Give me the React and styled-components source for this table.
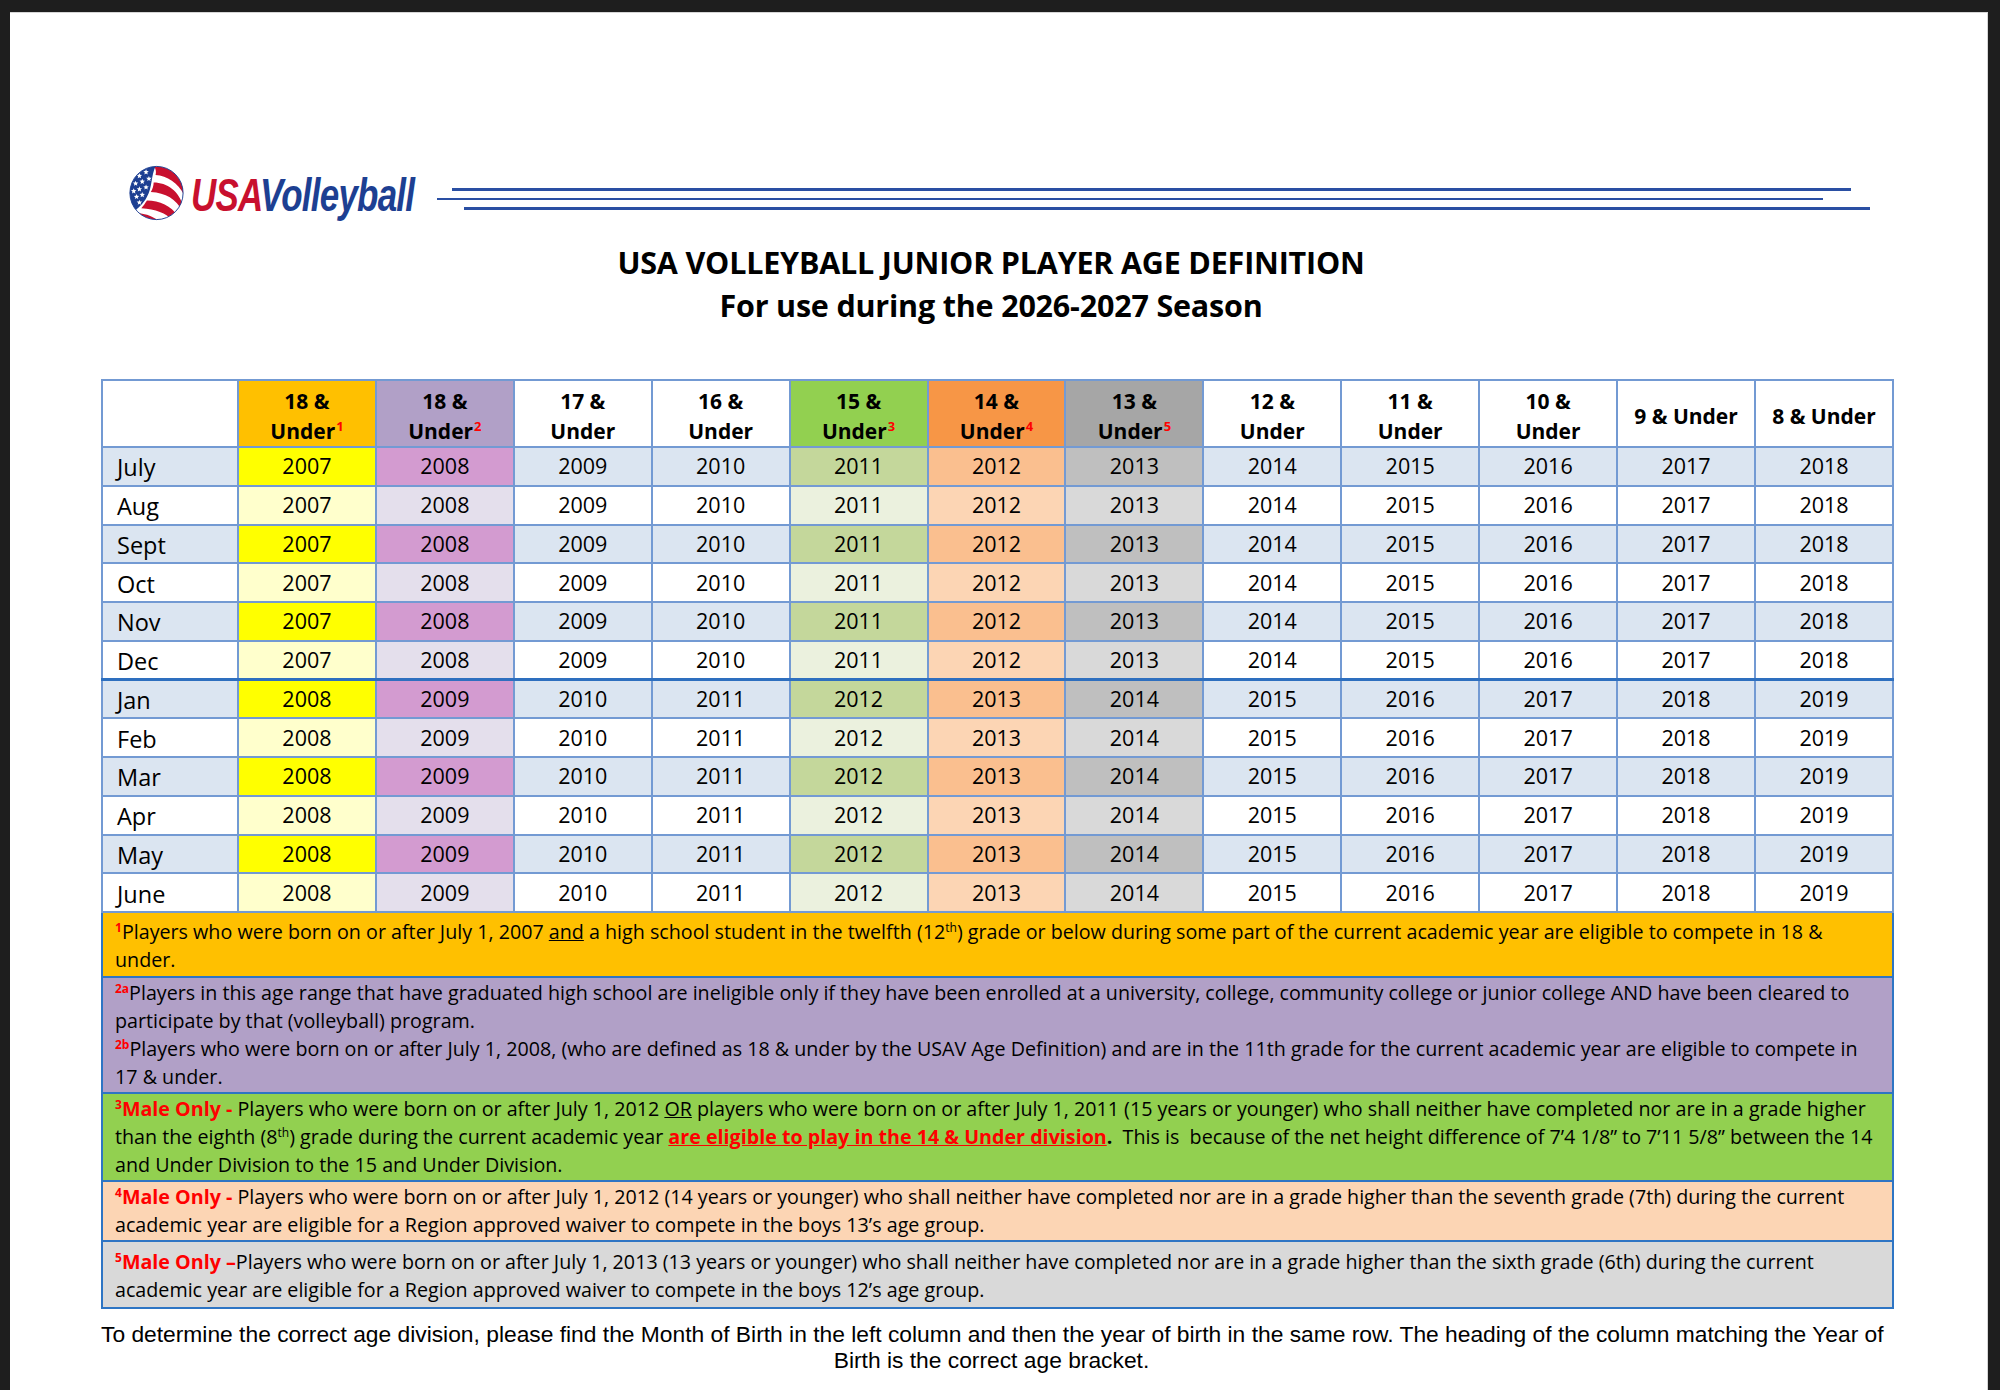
import React from "react";
import styled, { createGlobalStyle } from "styled-components";

const GlobalStyle = createGlobalStyle`
  html, body {
    margin: 0;
    padding: 0;
    background: #1e1e1e;
  }
  body {
    font-family: "Open Sans", "Liberation Sans", sans-serif;
    color: #000;
  }
`;

const Frame = styled.div`
  padding: 12px 12px 0 10px;
`;

const Page = styled.section`
  background: #fff;
  min-height: 1378px;
  border-top: 1px solid #d6d6d6;
  border-right: 1px solid #d6d6d6;
  box-sizing: border-box;
  padding: 150px 94px 0 91px;
`;

const HeaderRow = styled.div`
  display: flex;
  align-items: center;
  padding-left: 27px;
  height: 60px;
`;

const Logo = styled.div`
  display: flex;
  align-items: center;
  width: 287px;
  height: 60px;
`;

const Wordmark = styled.div`
  width: 224px;
  margin-left: 6px;
  overflow: visible;
  white-space: nowrap;
  font-family: "Liberation Sans", Arial, sans-serif;
  font-weight: 700;
  font-style: italic;
  font-size: 46px;
  letter-spacing: -1px;
  line-height: 1;
  transform: scaleX(0.76);
  transform-origin: left center;
  margin-top: 4px;
`;

const WordPart = styled.span`
  color: ${({ red }) => (red ? "#c8102e" : "#1d3f92")};
`;

const RuleStack = styled.div`
  display: flex;
  flex-direction: column;
  gap: 7px;
  width: 1433px;
  margin-left: 22px;
  margin-top: 12px;
`;

const Rule = styled.div`
  height: 2.5px;
  background: #2a4fa3;
  margin-left: ${({ left }) => left}px;
  margin-right: ${({ right }) => right}px;
`;

const Title = styled.h1`
  margin: 18px 0 0;
  padding-right: 12px;
  text-align: center;
  font-family: "Open Sans", sans-serif;
  font-weight: 700;
  font-size: 30.5px;
  line-height: 43px;
  letter-spacing: -0.2px;
`;

const Grid = styled.table`
  margin-top: 52px;
  width: 1793px;
  table-layout: fixed;
  border-collapse: collapse;
  font-family: "Open Sans", sans-serif;
`;

const HeadCell = styled.th`
  background: ${({ bg }) => bg || "#fff"};
  border: 2px solid #739ad3;
  height: 67px;
  padding: 5px 0 0;
  box-sizing: border-box;
  font-size: 21px;
  font-weight: 700;
  line-height: 30px;
  text-align: center;
  vertical-align: middle;
`;

const Row = styled.tr`
  background: ${({ shaded }) => (shaded ? "#dbe5f1" : "#fff")};
`;

const MonthCell = styled.td`
  border: 2px solid #739ad3;
  border-top: ${({ split }) => (split ? "3px solid #2e6fbf" : "2px solid #739ad3")};
  height: 38.75px;
  padding: 2px 0 0 14px;
  box-sizing: border-box;
  font-size: 23.5px;
  line-height: 30px;
`;

const YearCell = styled.td`
  border: 2px solid #739ad3;
  border-top: ${({ split }) => (split ? "3px solid #2e6fbf" : "2px solid #739ad3")};
  background: ${({ bg }) => bg || "transparent"};
  height: 38.75px;
  padding: 0;
  box-sizing: border-box;
  text-align: center;
  font-size: 21.5px;
  line-height: 30px;
`;

const Sup = styled.sup`
  color: ${({ red }) => (red ? "#ff0000" : "inherit")};
  font-size: ${({ small }) => (small ? "12px" : "13px")};
  font-weight: ${({ red }) => (red ? 700 : 400)};
  line-height: 0;
  vertical-align: ${({ small }) => (small ? "7px" : "8px")};
  margin-left: ${({ gap }) => (gap ? "1px" : "0")};
`;

const Notes = styled.div`
  width: 1793px;
  box-sizing: border-box;
  border-left: 2px solid #2e75c4;
  border-right: 2px solid #2e75c4;
  border-bottom: 2px solid #2e75c4;
  font-family: "Open Sans", sans-serif;
  font-size: 19.7px;
`;

const Note = styled.div`
  background: ${({ bg }) => bg};
  padding: ${({ pad }) => pad};
  border-top: ${({ first }) => (first ? "none" : "2px solid #2e75c4")};
  line-height: 28px;
`;

const Line = styled.div`
  white-space: nowrap;
`;

const Male = styled.span`
  color: #ff0000;
  font-weight: 700;
`;

const U = styled.span`
  text-decoration: underline;
`;

const Callout = styled.span`
  color: #ff0000;
  font-weight: 700;
  text-decoration: underline;
`;

const Footer = styled.div`
  margin: 12px 0 0;
  width: 1781px;
  text-align: center;
  font-family: "Liberation Sans", Arial, sans-serif;
  font-size: 22.8px;
  line-height: 26px;
`;

const FooterLine = styled.div`
  white-space: nowrap;
`;

const starPoints = (cx, cy, r) => {
  const pts = [];
  for (let i = 0; i < 10; i++) {
    const rad = i % 2 === 0 ? r : r * 0.45;
    const a = -Math.PI / 2 + (i * Math.PI) / 5;
    pts.push(`${(cx + rad * Math.cos(a)).toFixed(2)},${(cy + rad * Math.sin(a)).toFixed(2)}`);
  }
  return pts.join(" ");
};

const stars = [
  [12, 12], [19, 8], [8, 20], [15, 18], [22, 15],
  [6, 28], [12, 26], [19, 24], [9, 34], [15, 32], [12, 40],
];

function Ball() {
  return (
    <svg width="60" height="60" viewBox="0 0 60 60">
      <defs>
        <clipPath id="ballClip">
          <circle cx="30" cy="30" r="28" />
        </clipPath>
      </defs>
      <g clipPath="url(#ballClip)">
        <circle cx="30" cy="30" r="28" fill="#fff" />
        <path d="M0 0 H30 C24 10 26 24 20 34 C16 42 10 46 4 52 L0 60 Z" fill="#1d3f92" />
        {stars.map(([x, y], i) => (
          <polygon key={i} points={starPoints(x, y, 3)} fill="#fff" />
        ))}
        <path d="M27 1 C42 0 56 10 60 28 L60 34 C54 20 42 12 29 11 C30 7 29 4 27 1 Z" fill="#c8102e" />
        <path d="M27 19 C41 19 54 28 58 44 L58 50 C50 36 40 30 24 29 C26 26 27 22 27 19 Z" fill="#c8102e" />
        <path d="M20 38 C33 38 46 44 52 54 L48 60 C42 52 30 47 14 46 C16 44 18 41 20 38 Z" fill="#c8102e" />
        <path d="M4 52 C12 50 22 52 34 60 L10 60 Z" fill="#c8102e" />
      </g>
      <circle cx="30" cy="30" r="28" fill="none" stroke="#1d3f92" strokeWidth="1" />
    </svg>
  );
}

const columns = [
  { head: ["18 &", "Under"], sup: "1", headBg: "#ffc000", dark: "#ffff00", light: "#ffffcc", start: 2007 },
  { head: ["18 &", "Under"], sup: "2", headBg: "#b1a0c7", dark: "#d39bd0", light: "#e4dfec", start: 2008 },
  { head: ["17 &", "Under"], start: 2009 },
  { head: ["16 &", "Under"], start: 2010 },
  { head: ["15 &", "Under"], sup: "3", headBg: "#92d050", dark: "#c4d79b", light: "#ebf1de", start: 2011 },
  { head: ["14 &", "Under"], sup: "4", headBg: "#f79646", dark: "#fabf8f", light: "#fcd5b4", start: 2012 },
  { head: ["13 &", "Under"], sup: "5", headBg: "#a6a6a6", dark: "#bfbfbf", light: "#d9d9d9", start: 2013 },
  { head: ["12 &", "Under"], start: 2014 },
  { head: ["11 &", "Under"], start: 2015 },
  { head: ["10 &", "Under"], start: 2016 },
  { head: ["9 & Under"], start: 2017 },
  { head: ["8 & Under"], start: 2018 },
];

const months = ["July", "Aug", "Sept", "Oct", "Nov", "Dec", "Jan", "Feb", "Mar", "Apr", "May", "June"];

export default function App() {
  return (
    <>
      <GlobalStyle />
      <Frame>
        <Page>
          <HeaderRow>
            <Logo>
              <Ball />
              <Wordmark>
                <WordPart red>USA</WordPart>
                <WordPart>Volleyball</WordPart>
              </Wordmark>
            </Logo>
            <RuleStack>
              <Rule left={15} right={19} />
              <Rule left={0} right={47} />
              <Rule left={27} right={0} />
            </RuleStack>
          </HeaderRow>

          <Title>
            USA VOLLEYBALL JUNIOR PLAYER AGE DEFINITION
            <br />
            For use during the 2026-2027 Season
          </Title>

          <Grid>
            <colgroup>
              <col style={{ width: 136 }} />
              {columns.map((c, i) => (
                <col key={i} />
              ))}
            </colgroup>
            <thead>
              <tr>
                <HeadCell />
                {columns.map((c, i) => (
                  <HeadCell key={i} bg={c.headBg}>
                    {c.head[0]}
                    {c.head[1] && (
                      <>
                        <br />
                        {c.head[1]}
                        {c.sup && <Sup red gap>{c.sup}</Sup>}
                      </>
                    )}
                  </HeadCell>
                ))}
              </tr>
            </thead>
            <tbody>
              {months.map((m, r) => {
                const shaded = r % 2 === 0;
                const nextYear = r >= 6 ? 1 : 0;
                return (
                  <Row key={m} shaded={shaded}>
                    <MonthCell split={r === 6}>{m}</MonthCell>
                    {columns.map((c, i) => (
                      <YearCell
                        key={i}
                        split={r === 6}
                        bg={c.dark ? (shaded ? c.dark : c.light) : undefined}
                      >
                        {c.start + nextYear}
                      </YearCell>
                    ))}
                  </Row>
                );
              })}
            </tbody>
          </Grid>

          <Notes>
            <Note first bg="#ffc000" pad="5px 12px 2px">
              <Line>
                <Sup red small>1</Sup>Players who were born on or after July 1, 2007 <U>and</U> a high school student in the twelfth (12<Sup small>th</Sup>) grade or below during some part of the current academic year are eligible to compete in 18 &amp;
              </Line>
              <Line>under.</Line>
            </Note>
            <Note bg="#b1a0c7" pad="1px 12px 1px">
              <Line>
                <Sup red small>2a</Sup>Players in this age range that have graduated high school are ineligible only if they have been enrolled at a university, college, community college or junior college AND have been cleared to
              </Line>
              <Line>participate by that (volleyball) program.</Line>
              <Line>
                <Sup red small>2b</Sup>Players who were born on or after July 1, 2008, (who are defined as 18 &amp; under by the USAV Age Definition) and are in the 11th grade for the current academic year are eligible to compete in
              </Line>
              <Line>17 &amp; under.</Line>
            </Note>
            <Note bg="#92d050" pad="1px 12px 1px">
              <Line>
                <Male>
                  <Sup red small>3</Sup>Male Only -{" "}
                </Male>
                Players who were born on or after July 1, 2012 <U>OR</U> players who were born on or after July 1, 2011 (15 years or younger) who shall neither have completed nor are in a grade higher
              </Line>
              <Line>
                than the eighth (8<Sup small>th</Sup>) grade during the current academic year{" "}
                <Callout>are eligible to play in the 14 &amp; Under division</Callout>
                <b>.</b>&nbsp; This is&nbsp; because of the net height difference of 7’4 1/8” to 7’11 5/8” between the 14
              </Line>
              <Line>and Under Division to the 15 and Under Division.</Line>
            </Note>
            <Note bg="#fcd5b4" pad="1px 12px 1px">
              <Line>
                <Male>
                  <Sup red small>4</Sup>Male Only -{" "}
                </Male>
                Players who were born on or after July 1, 2012 (14 years or younger) who shall neither have completed nor are in a grade higher than the seventh grade (7th) during the current
              </Line>
              <Line>academic year are eligible for a Region approved waiver to compete in the boys 13’s age group.</Line>
            </Note>
            <Note bg="#d9d9d9" pad="6px 12px 3px">
              <Line>
                <Male>
                  <Sup red small>5</Sup>Male Only –
                </Male>
                Players who were born on or after July 1, 2013 (13 years or younger) who shall neither have completed nor are in a grade higher than the sixth grade (6th) during the current
              </Line>
              <Line>academic year are eligible for a Region approved waiver to compete in the boys 12’s age group.</Line>
            </Note>
          </Notes>

          <Footer>
            <FooterLine>
              To determine the correct age division, please find the Month of Birth in the left column and then the year of birth in the same row. The heading of the column matching the Year of
            </FooterLine>
            <FooterLine>Birth is the correct age bracket.</FooterLine>
          </Footer>
        </Page>
      </Frame>
    </>
  );
}
